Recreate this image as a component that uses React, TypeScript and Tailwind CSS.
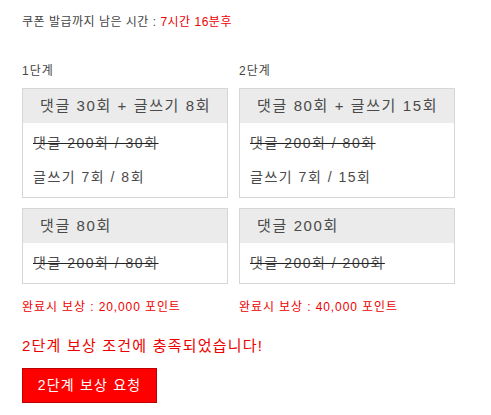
const font = { fontFamily: '"Liberation Sans", "Noto Sans CJK KR", sans-serif' };

type Mission = { title: string; rows: { text: string; done: boolean }[] };
type Stage = { label: string; missions: Mission[]; reward: string };

const stages: Stage[] = [
  {
    label: "1단계",
    missions: [
      {
        title: "댓글 30회 + 글쓰기 8회",
        rows: [
          { text: "댓글 200회 / 30회", done: true },
          { text: "글쓰기 7회 / 8회", done: false },
        ],
      },
      { title: "댓글 80회", rows: [{ text: "댓글 200회 / 80회", done: true }] },
    ],
    reward: "완료시 보상 : 20,000 포인트",
  },
  {
    label: "2단계",
    missions: [
      {
        title: "댓글 80회 + 글쓰기 15회",
        rows: [
          { text: "댓글 200회 / 80회", done: true },
          { text: "글쓰기 7회 / 15회", done: false },
        ],
      },
      { title: "댓글 200회", rows: [{ text: "댓글 200회 / 200회", done: true }] },
    ],
    reward: "완료시 보상 : 40,000 포인트",
  },
];

function MissionBox({ mission }: { mission: Mission }) {
  return (
    <div className="border border-[#d6d6d6] bg-white">
      <div className="h-[34px] flex items-center pl-[17px] pr-[16px] bg-[#ebebeb] text-[15px] tracking-[1.6px] text-[#4a4a4a] whitespace-nowrap">
        {mission.title}
      </div>
      <div className="py-[3px] px-[10px]">
        {mission.rows.map((r) => (
          <div
            key={r.text}
            className={`h-[34px] flex items-center text-[14px] tracking-[1.5px] text-[#4a4a4a] whitespace-nowrap ${r.done ? "line-through decoration-[#222]" : ""}`}
          >
            {r.text}
          </div>
        ))}
      </div>
    </div>
  );
}

export default function App() {
  return (
    <div className="min-h-screen bg-white pl-[22px] pt-[14px]" style={font}>
      <p className="text-[12px] leading-[16px] tracking-[0.5px] text-[#444]">
        쿠폰 발급까지 남은 시간 : <span className="text-[#e00]">7시간 16분후</span>
      </p>

      <div className="flex gap-[11px] mt-[33px]">
        {stages.map((s) => (
          <div key={s.label} className="flex flex-col">
            <div className="text-[12px] leading-[16px] tracking-[1px] text-[#444] mb-[9px]">{s.label}</div>
            <div className="flex flex-col gap-[10px]">
              {s.missions.map((m) => (
                <MissionBox key={m.title} mission={m} />
              ))}
            </div>
            <div className="mt-[15px] text-[12px] leading-[16px] text-[#e00] tracking-[0.9px]">{s.reward}</div>
          </div>
        ))}
      </div>

      <p className="mt-[21px] text-[15px] leading-[20px] tracking-[1.2px] text-[#e00]">
        2단계 보상 조건에 충족되었습니다!
      </p>

      <button className="mt-[12px] w-[135px] h-[35px] bg-[#ff0000] border border-[#b00] text-white text-[14px] tracking-[1.2px]">
        2단계 보상 요청
      </button>
    </div>
  );
}
